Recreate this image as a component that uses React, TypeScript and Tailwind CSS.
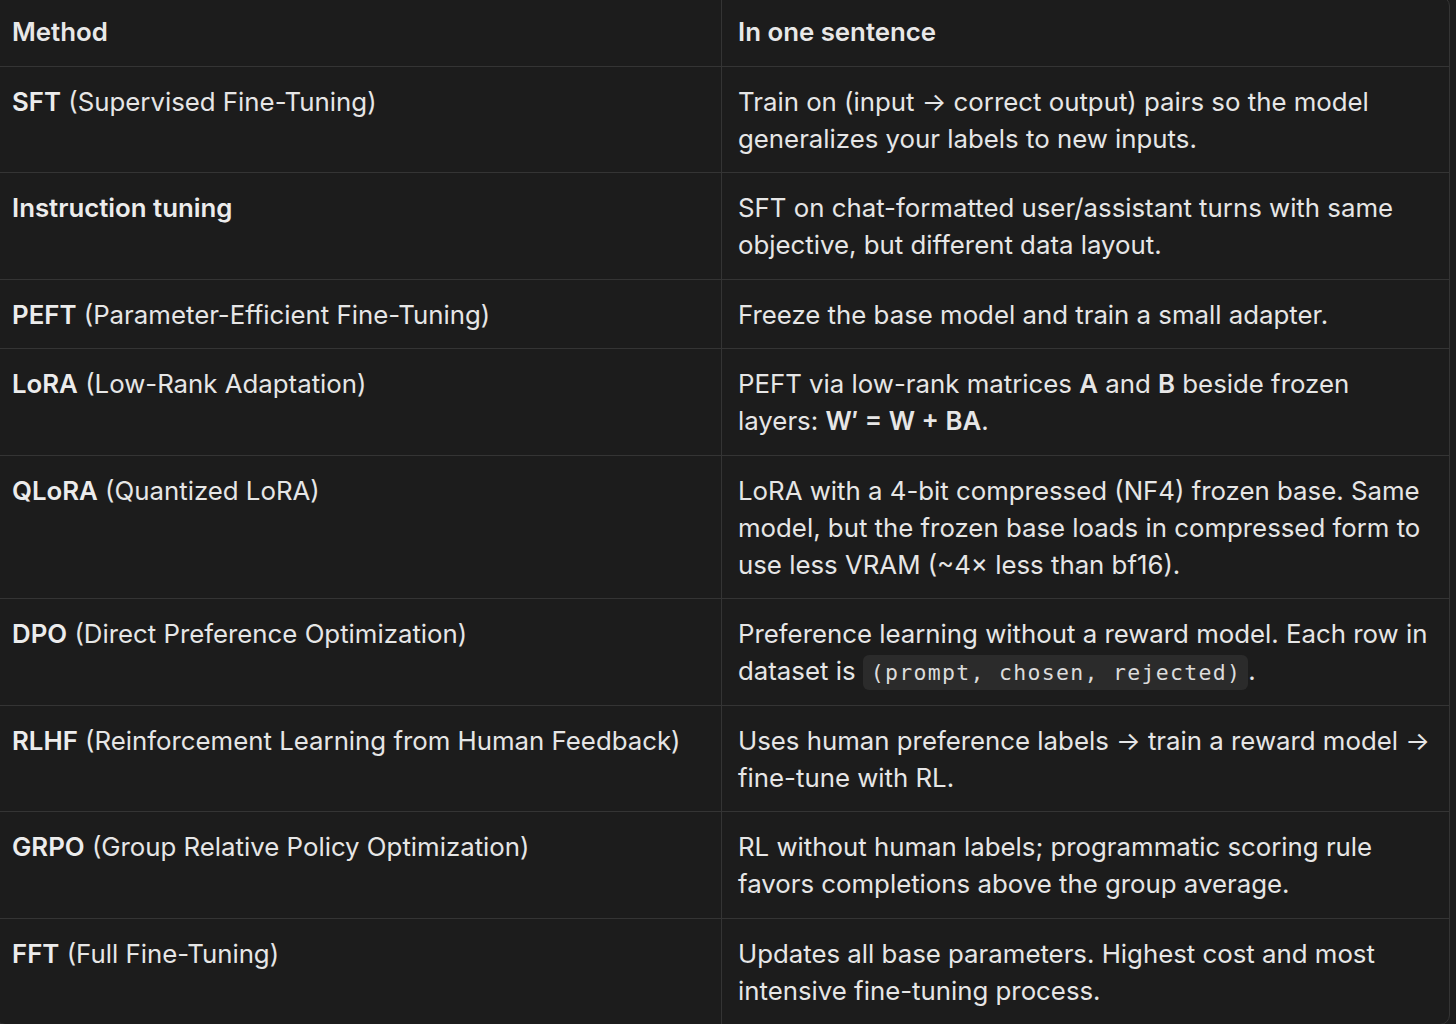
const rows: { term: string; full?: string; desc: React.ReactNode }[] = [
  {
    term: "SFT",
    full: "(Supervised Fine-Tuning)",
    desc: "Train on (input → correct output) pairs so the model generalizes your labels to new inputs.",
  },
  {
    term: "Instruction tuning",
    desc: "SFT on chat-formatted user/assistant turns with same objective, but different data layout.",
  },
  {
    term: "PEFT",
    full: "(Parameter-Efficient Fine-Tuning)",
    desc: "Freeze the base model and train a small adapter.",
  },
  {
    term: "LoRA",
    full: "(Low-Rank Adaptation)",
    desc: (
      <>
        PEFT via low-rank matrices <b className="font-semibold">A</b> and{" "}
        <b className="font-semibold">B</b> beside frozen layers:{" "}
        <b className="font-semibold">W′ = W + BA</b>.
      </>
    ),
  },
  {
    term: "QLoRA",
    full: "(Quantized LoRA)",
    desc: "LoRA with a 4-bit compressed (NF4) frozen base. Same model, but the frozen base loads in compressed form to use less VRAM (~4× less than bf16).",
  },
  {
    term: "DPO",
    full: "(Direct Preference Optimization)",
    desc: (
      <>
        Preference learning without a reward model. Each row in dataset is{" "}
        <code className="rounded-md bg-[#2b2b2b] py-[5px] pl-[8px] pr-[7px] font-['DejaVu_Sans_Mono',monospace] text-[21.5px] leading-none tracking-[1.3px] text-[#dcdcdc]">
          (prompt, chosen, rejected)
        </code>
        .
      </>
    ),
  },
  {
    term: "RLHF",
    full: "(Reinforcement Learning from Human Feedback)",
    desc: "Uses human preference labels → train a reward model → fine-tune with RL.",
  },
  {
    term: "GRPO",
    full: "(Group Relative Policy Optimization)",
    desc: "RL without human labels; programmatic scoring rule favors completions above the group average.",
  },
  {
    term: "FFT",
    full: "(Full Fine-Tuning)",
    desc: "Updates all base parameters. Highest cost and most intensive fine-tuning process.",
  },
];

export default function App() {
  return (
    <div className="h-[1024px] w-[1456px] overflow-hidden bg-[#1b1b1b] font-['Inter',sans-serif] text-[25.8px] leading-[37px] text-[#e6e6e6]">
      <div className="-ml-[5px] -mt-[4px] w-[1455px] overflow-hidden rounded-[10px] border border-[#343434] bg-[#1c1c1c]">
        <div className="grid grid-cols-[726px_1fr] border-b border-[#343434]">
          <div className="border-r border-[#343434] pb-[15.5px] pl-[16px] pt-[16px] font-semibold text-[#e8e8e8]">
            Method
          </div>
          <div className="pb-[15.5px] pl-[16px] pt-[16px] font-semibold text-[#e8e8e8]">
            In one sentence
          </div>
        </div>
        {rows.map((r, i) => (
          <div
            key={r.term}
            className={
              i < rows.length - 1
                ? "grid grid-cols-[726px_1fr] border-b border-[#343434]"
                : "grid grid-cols-[726px_1fr]"
            }
          >
            <div className="border-r border-[#343434] pb-[15.5px] pl-[16px] pr-[16px] pt-[16px]">
              <span className="font-semibold text-[#ececec]">{r.term}</span>
              {r.full && <> {r.full}</>}
            </div>
            <div className="pb-[15.5px] pl-[16px] pr-[16px] pt-[16px]">{r.desc}</div>
          </div>
        ))}
      </div>
    </div>
  );
}
